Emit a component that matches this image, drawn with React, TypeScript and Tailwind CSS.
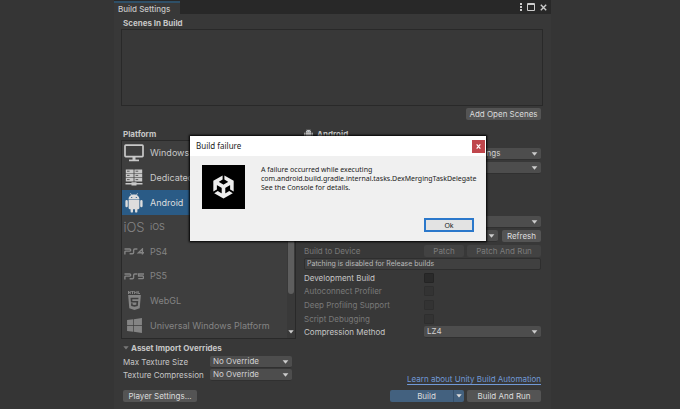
import { useState } from 'react';
import type { ReactNode } from 'react';
import clsx from 'clsx';
import { FaHtml5, FaWindows } from 'react-icons/fa';
import { SiUnity } from 'react-icons/si';

function Caret({ className }: { className?: string }) {
  return (
    <svg viewBox="0 0 8 5" className={clsx('h-[4px] pointer-events-none', className)} fill="currentColor">
      <path d="M0.4 0.3h7.2L4 4.6z" />
    </svg>
  );
}

function AndroidIcon({ className }: { className?: string }) {
  return (
    <svg viewBox="0 0 18 20" className={className} fill="currentColor">
      <path d="M3.6 6.4C3.6 3.6 6 1.6 9 1.6s5.4 2 5.4 4.8zM3.6 7.1h10.8v8q0 1.1-1.1 1.1H4.7q-1.1 0-1.1-1.1z" />
      <path
        d="M1.6 8.3v4.8M16.4 8.3v4.8M6.8 15v3.4M11.2 15v3.4"
        stroke="currentColor"
        strokeWidth="2.4"
        strokeLinecap="round"
      />
      <path d="M5.6 0.5l1.3 2M12.4 0.5l-1.3 2" stroke="currentColor" strokeWidth="0.7" strokeLinecap="round" />
      <path d="M6.2 3.9h1v1h-1zM10.8 3.9h1v1h-1z" fill="#2a5b86" />
    </svg>
  );
}

function MonitorIcon() {
  return (
    <svg viewBox="0 0 20 18" className="w-5 h-[18px]" fill="none" stroke="currentColor" strokeWidth="1.7">
      <rect x="1" y="1.2" width="18" height="11.4" rx="0.8" />
      <path d="M5 16.4h10" />
      <path d="M10 13v3.4" strokeWidth="3" />
    </svg>
  );
}

function ServerIcon() {
  return (
    <svg viewBox="0 0 18 17" className="w-[18px] h-[17px]" fill="currentColor">
      {[0.4, 4.6, 8.8].map((y) => (
        <g key={y}>
          <path d={`M0.8 ${y}h7.8v3.6H0.8zM9.4 ${y}h7.8v3.6H9.4z`} />
          <path d={`M2 ${y + 1.8}h2.6M10.6 ${y + 1.8}h2.6`} stroke="#3e3e3e" strokeWidth="0.8" />
        </g>
      ))}
      <path d="M0.5 14h6v-0.8h5V14h6v1.6h-6v0.9h-5v-0.9h-6z" />
    </svg>
  );
}

function PsIcon({ five }: { five?: boolean }) {
  return (
    <svg viewBox="0 0 20 7" className="w-5 h-[7px]" fill="none" stroke="currentColor" strokeWidth="1.4">
      <path d="M0.5 1h5.2q1 0 1 0.9t-1 1.2H1.9q-1 0-1 1V6.5" />
      <path d="M13.4 1h-2.6q-1.2 0-1.2 1.4v2q0 1.3-1.2 1.3H5.6" />
      {five ? (
        <path d="M20 1h-5.4v2h4q1 0 1 1.2t-1 1.4h-4.4" />
      ) : (
        <path d="M18.4 6.5V1l-4 3.7H20" />
      )}
    </svg>
  );
}

function WebglIcon() {
  return (
    <div className="flex flex-col items-center">
      <svg viewBox="0 0 12 3" className="w-3 h-[3px]" fill="none" stroke="currentColor" strokeWidth="1">
        <path d="M0.5 0v3M2.2 0v3M0.5 1.5h1.7M3.3 0.5h2.4M4.5 0.5V3M6.6 3V0.4l1.2 1.4L9 0.4V3M10.2 0v2.5H12" />
      </svg>
      <FaHtml5 className="w-[17px] h-[17px]" />
    </div>
  );
}

const platforms: { name: string; icon: ReactNode; installed: boolean }[] = [
  { name: 'Windows,', icon: <MonitorIcon />, installed: true },
  { name: 'Dedicated', icon: <ServerIcon />, installed: true },
  { name: 'Android', icon: <AndroidIcon className="w-[18px] h-5" />, installed: true },
  { name: 'iOS', icon: <span className="text-[13px] font-light">iOS</span>, installed: false },
  { name: 'PS4', icon: <PsIcon />, installed: false },
  { name: 'PS5', icon: <PsIcon five />, installed: false },
  { name: 'WebGL', icon: <WebglIcon />, installed: false },
  { name: 'Universal Windows Platform', icon: <FaWindows className="w-[17px] h-[17px]" />, installed: false },
];

function Dropdown({ id, label, value, className }: { id: string; label?: string; value: string; className?: string }) {
  return (
    <div className={clsx('relative h-3', className)}>
      <select
        id={id}
        aria-label={label}
        className="block w-full h-3 pl-[3px] pr-3 appearance-none rounded-[2px] bg-[#4d4d4d] border-b border-[#303030] text-[#d2d2d2] leading-[11px] outline-none"
      >
        <option>{value}</option>
      </select>
      <Caret className="w-[7px] absolute right-[3px] top-1 text-[#cccccc]" />
    </div>
  );
}

function EditorButton({ children, className, disabled }: { children: ReactNode; className?: string; disabled?: boolean }) {
  return (
    <button
      disabled={disabled}
      className={clsx(
        'h-3 rounded-[2px] leading-3 whitespace-nowrap',
        disabled ? 'bg-[#424242] text-[#7c7c7c]' : 'bg-[#545454] text-[#dcdcdc]',
        className
      )}
    >
      {children}
    </button>
  );
}

function CheckRow({ id, label, disabled }: { id: string; label: string; disabled?: boolean }) {
  return (
    <div className="flex items-center">
      <label htmlFor={id} className={clsx('w-[120px]', disabled && 'text-[#787878]')}>
        {label}
      </label>
      <input
        id={id}
        type="checkbox"
        disabled={disabled}
        className="appearance-none w-[10px] h-[10px] rounded-[1px] bg-[#2a2a2a] border border-[#242424] disabled:bg-[#333333] disabled:border-[#2e2e2e]"
      />
    </div>
  );
}

function PlatformList() {
  const [selected, setSelected] = useState('Android');

  return (
    <div className="flex h-[199px] border border-[#292929] bg-[#3e3e3e]">
      <div className="flex-1 min-w-0 grid auto-rows-fr">
        {platforms.map(({ name, icon, installed }) => (
          <button
            key={name}
            onClick={() => setSelected(name)}
            className={clsx(
              'flex items-center gap-[6px] pl-[2px] text-left text-[9px] whitespace-nowrap overflow-hidden',
              selected === name ? 'bg-[#2a5b86] text-[#dddddd]' : installed ? 'text-[#c8c8c8]' : 'text-[#848484]'
            )}
          >
            <span className="w-5 flex justify-center shrink-0">{icon}</span>
            {name}
          </button>
        ))}
      </div>
      <div className="w-2 flex flex-col items-center justify-between bg-[#393939] pb-1">
        <div className="w-[6px] h-[153px] rounded-full bg-[#5e5e5e]" />
        <Caret className="w-[6px] text-[#cccccc]" />
      </div>
    </div>
  );
}

function BuildOptions() {
  return (
    <div className="flex-1 min-w-0 pr-[2px]">
      <h2 className="flex items-center gap-1 h-3 text-[8px] font-bold">
        <AndroidIcon className="w-[9px] h-[10px]" />
        Android
      </h2>
      <div className="pl-[120px] pt-2 flex flex-col gap-[2px]">
        <Dropdown id="texture" label="Texture Compression" value="Use Player Settings" />
        <Dropdown id="fallback" label="ETC2 fallback" value="32-bit" />
      </div>
      <div className="pl-[120px] mt-[42px] flex flex-col gap-[2px]">
        <Dropdown id="export" label="Symbols" value="Disabled" />
        <div className="flex gap-1">
          <Dropdown id="device" label="Run Device" value="Default" className="flex-1" />
          <EditorButton className="w-[39px]">Refresh</EditorButton>
        </div>
      </div>
      <div className="h-[95px] mt-[2px] grid auto-rows-fr">
        <div className="flex items-center text-[#787878]">
          <span className="w-[120px]">Build to Device</span>
          <EditorButton disabled className="w-10 mr-[3px]">Patch</EditorButton>
          <EditorButton disabled className="flex-1">Patch And Run</EditorButton>
        </div>
        <div className="flex items-center">
          <p className="flex-1 h-[12px] px-[2px] rounded-[2px] border border-[#2e2e2e] bg-[#404040] text-[7px] leading-[10px] text-[#b8b8b8]">
            Patching is disabled for Release builds
          </p>
        </div>
        <CheckRow id="development" label="Development Build" />
        <CheckRow id="profiler" label="Autoconnect Profiler" disabled />
        <CheckRow id="deep" label="Deep Profiling Support" disabled />
        <CheckRow id="script" label="Script Debugging" disabled />
        <div className="flex items-center">
          <label htmlFor="compression" className="w-[120px]">Compression Method</label>
          <Dropdown id="compression" value="LZ4" className="flex-1" />
        </div>
      </div>
    </div>
  );
}

function FailureDialog() {
  return (
    <div
      role="dialog"
      aria-labelledby="failure-title"
      className="absolute left-[76px] top-[136px] w-[296px] bg-[#f0f0f0] text-[#1c1c1c] font-['Noto_Sans',sans-serif] shadow-[0_0_2px_1px_#000000]"
    >
      <div className="flex items-center justify-between h-5 pl-[6px] pr-px bg-white">
        <h2 id="failure-title" className="text-[8px]">Build failure</h2>
        <button aria-label="Close" className="w-[13px] h-[13px] mt-px bg-[#c0464c] flex items-center justify-center">
          <svg viewBox="0 0 6 6" className="w-[5px] h-[5px]" stroke="white" strokeWidth="1.5">
            <path d="M0.8 0.5l4.4 5M5.2 0.5l-4.4 5" />
          </svg>
        </button>
      </div>
      <div className="flex gap-4 pt-[9px] pl-3">
        <div className="w-[43px] h-[44px] bg-black flex items-center justify-center">
          <SiUnity className="w-[23px] h-[24px] text-[#eeeeee]" />
        </div>
        <p className="text-[7px] leading-[9px] whitespace-nowrap">
          A failure occurred while executing
          <br />
          com.android.build.gradle.internal.tasks.DexMergingTaskDelegate
          <br />
          See the Console for details.
        </p>
      </div>
      <div className="flex justify-end pt-[9px] pr-3 pb-[9px]">
        <button className="w-[50px] h-[14px] border-2 border-[#2b78cb] bg-[#e3e3e3] text-[7px] leading-[9px]">Ok</button>
      </div>
    </div>
  );
}

export default function App() {
  return (
    <div className="min-h-screen flex bg-[#353535] pl-[114px] pr-[129px] font-[Inter,sans-serif] text-[8px] leading-3 text-[#c6c6c6]">
      <main className="relative flex-1 bg-[#383838]">
        <header className="flex h-[14px] bg-[#282828]">
          <h1 className="w-[66px] mt-px pl-1 border-t-2 border-[#2f5068] bg-[#383838] text-[8px] font-medium">
            Build Settings
          </h1>
          <div className="ml-auto flex items-center gap-[5px] pr-1 text-[#cccccc]">
            <button aria-label="Menu">
              <svg viewBox="0 0 2 8" className="w-[2px] h-2" fill="currentColor">
                <path d="M0 0h2v2H0zM0 3h2v2H0zM0 6h2v2H0z" />
              </svg>
            </button>
            <button aria-label="Maximize">
              <svg viewBox="0 0 8 8" className="w-2 h-2" fill="none" stroke="currentColor">
                <path d="M0.5 0.5h7v7h-7zM0 1.5h8" />
              </svg>
            </button>
            <button aria-label="Close window">
              <svg viewBox="0 0 7 7" className="w-[7px] h-[7px]" stroke="currentColor" strokeWidth="1.4">
                <path d="M0.8 0.8l5.4 5.4M6.2 0.8L0.8 6.2" />
              </svg>
            </button>
          </div>
        </header>

        <div className="pt-[3px] pl-[7px] pr-2">
          <h2 className="pl-[2px] text-[8px] font-bold">Scenes In Build</h2>
          <div className="h-[77px] border border-[#292929]" />
          <div className="flex justify-end mt-[2px] pr-[2px]">
            <EditorButton className="w-[75px]">Add Open Scenes</EditorButton>
          </div>

          <div className="flex gap-2 mt-2">
            <div className="w-[175px] shrink-0">
              <h2 className="pl-[2px] text-[8px] font-bold">Platform</h2>
              <PlatformList />
            </div>
            <BuildOptions />
          </div>

          <div className="flex justify-between items-end mt-[2px] pr-[2px]">
            <div className="pl-[2px] pb-1">
              <h2 className="flex items-center gap-[2px] h-[14px] text-[8px] font-bold">
                <Caret className="w-[6px] shrink-0 text-[#777777]" />
                Asset Import Overrides
              </h2>
              <div className="flex items-center h-[13px]">
                <label htmlFor="max-size" className="w-[87px]">Max Texture Size</label>
                <Dropdown id="max-size" value="No Override" className="w-[82px]" />
              </div>
              <div className="flex items-center h-[13px]">
                <label htmlFor="tex-compression" className="w-[87px]">Texture Compression</label>
                <Dropdown id="tex-compression" value="No Override" className="w-[82px]" />
              </div>
            </div>
            <a href="#automation" className="text-[#7199d6] underline underline-offset-2">
              Learn about Unity Build Automation
            </a>
          </div>

          <div className="flex mt-[5px] pl-[2px] pr-[2px]">
            <EditorButton className="w-[74px]">Player Settings...</EditorButton>
            <div className="ml-auto mr-[3px] flex w-[74px] h-3 rounded-[2px] bg-[#43617f] text-[#dcdcdc]">
              <button className="flex-1 pl-[10px] text-center">Build</button>
              <button aria-label="Build options" className="w-[11px] flex items-center justify-center border-l border-[#35506b]">
                <Caret className="w-[6px] shrink-0" />
              </button>
            </div>
            <EditorButton className="w-[74px]">Build And Run</EditorButton>
          </div>
        </div>

        <FailureDialog />
      </main>
    </div>
  );
}
